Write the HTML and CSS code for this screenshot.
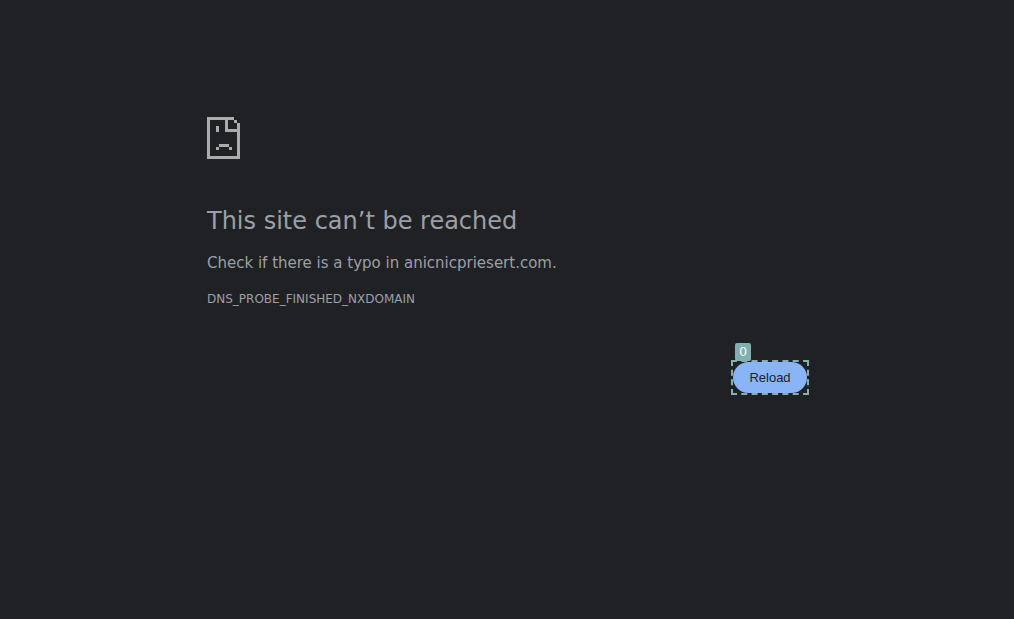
FILE: index.html
```
<!DOCTYPE html>
<html lang="en">
<head>
<meta charset="utf-8">
<meta name="viewport" content="width=device-width, initial-scale=1">
<title>anicnicpriesert.com</title>
<link rel="stylesheet" href="styles.css">
</head>
<body>
<main class="error-page">
  <svg class="error-icon" viewBox="0 0 33 42" aria-hidden="true" shape-rendering="crispEdges">
    <path d="M0 0H27V3H21V12H30V6H33V42H0ZM3 3V39H30V15H18V3Z" fill-rule="evenodd"/>
    <path d="M27 3H30V6H27ZM9 9H12V15H9ZM12 27H22V30H12ZM9 30H12V33H9ZM22 30H25V33H22Z"/>
  </svg>
  <h1 class="title">This site can’t be reached</h1>
  <p class="summary">Check if there is a typo in anicnicpriesert.com.</p>
  <p class="error-code">DNS_PROBE_FINISHED_NXDOMAIN</p>
  <div class="actions">
    <div class="marked">
      <button class="reload" type="button">Reload</button>
      <span class="marker">0</span>
    </div>
  </div>
</main>
</body>
</html>
```
FILE: styles.css
```
body {
  margin: 0;
  background: #202124;
  color: #9aa0a6;
  font-family: "DejaVu Sans", sans-serif;
  font-size: 15px;
  line-height: 24px;
}

.error-page {
  box-sizing: border-box;
  max-width: 600px;
  min-height: 100vh;
  margin: 0 auto;
  padding: 117px 0 24px;
}

.error-icon {
  display: block;
  width: 33px;
  height: 42px;
  fill: #acacac;
}

.title {
  margin: 48px 0 16px;
  font-size: 24px;
  font-weight: 400;
  line-height: 28px;
}

.summary {
  margin: 0;
}

.error-code {
  margin: 12px 0 0;
  font-size: 12px;
}

.actions {
  display: flex;
  justify-content: flex-end;
  margin-top: 51px;
}

.marked {
  position: relative;
}

.marked::after {
  content: "";
  position: absolute;
  inset: -2px;
  border: 2px dashed #83b0ae;
  pointer-events: none;
}

.reload {
  display: block;
  min-width: 74px;
  padding: 8px 16px;
  border: 0;
  border-radius: 16px;
  background: #8ab4f8;
  color: #202124;
  font: 13px/15px "Liberation Sans", sans-serif;
  cursor: pointer;
}

.marker {
  position: absolute;
  top: -19px;
  left: 2px;
  min-width: 8px;
  padding: 0 4px;
  border-radius: 2px;
  background: #83b0ae;
  color: #fff;
  font: 13px/18px "Liberation Sans", sans-serif;
  text-align: center;
}
```
